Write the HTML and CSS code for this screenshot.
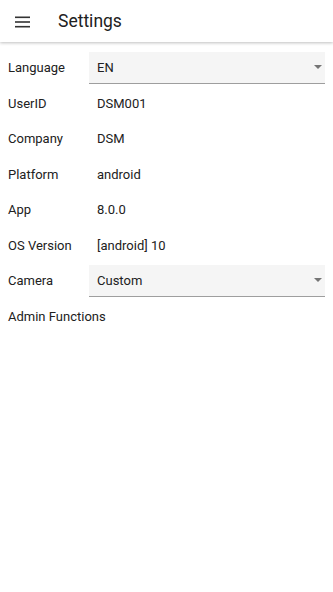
FILE: index.html
```html
<html lang="en-US">

<head>
	<title>Settings</title>
	<meta charset="utf-8">
	<meta name="viewport" content="width=device-width, initial-scale=1.0">
	<link rel="stylesheet" href="styles.css">
</head>

<body>
	<div class="toolbar">
		<div class="menu">
			<svg width="15" height="12" viewBox="0 0 15 12">
				<rect x="0" y="0.5" width="15" height="1.6" fill="#333"></rect>
				<rect x="0" y="5.2" width="15" height="1.6" fill="#333"></rect>
				<rect x="0" y="9.9" width="15" height="1.6" fill="#333"></rect>
			</svg>
		</div>
		<h1>Settings</h1>
	</div>

	<div class="content">
		<div class="row">
			<div class="label">Language</div>
			<div class="select">
				<span>EN</span>
				<div class="arrow"></div>
			</div>
		</div>
		<div class="row">
			<div class="label">UserID</div>
			<div class="value">DSM001</div>
		</div>
		<div class="row">
			<div class="label">Company</div>
			<div class="value">DSM</div>
		</div>
		<div class="row">
			<div class="label">Platform</div>
			<div class="value">android</div>
		</div>
		<div class="row">
			<div class="label">App</div>
			<div class="value">8.0.0</div>
		</div>
		<div class="row">
			<div class="label">OS Version</div>
			<div class="value">[android] 10</div>
		</div>
		<div class="row">
			<div class="label">Camera</div>
			<div class="select">
				<span>Custom</span>
				<div class="arrow"></div>
			</div>
		</div>
		<div class="row">
			<div class="label wide">Admin Functions</div>
		</div>
	</div>
</body>
</html>
```

FILE: styles.css
```css
html, body {
	padding: 0;
	margin: 0;
	background: #fff;
	color: #212121;
	font-family: Roboto, "Noto Sans", sans-serif;
	font-size: 13px;
}

*, *:before, *:after {
	box-sizing: border-box;
}

.toolbar {
	display: flex;
	align-items: center;
	height: 42px;
	background: #fff;
	box-shadow: 0 1px 3px rgba(0, 0, 0, 0.25);
	position: relative;
}

.toolbar .menu {
	display: flex;
	width: 58px;
	padding-left: 15px;
	padding-top: 1px;
}

.toolbar h1 {
	margin: 0;
	font-size: 17.5px;
	font-weight: 400;
	color: #212121;
}

.content {
	padding: 8px 8px 0 8px;
}

.row {
	display: flex;
	align-items: center;
	height: 35.5px;
}

.label {
	width: 81px;
	flex-shrink: 0;
}

.label.wide {
	width: auto;
}

.value {
	padding-left: 8px;
}

.select {
	flex-grow: 1;
	display: flex;
	align-items: center;
	justify-content: space-between;
	height: 32px;
	padding: 0 3px 0 8px;
	background: #f5f5f5;
	border-bottom: 1px solid #9e9e9e;
}

.arrow {
	width: 0;
	height: 0;
	border-left: 4px solid transparent;
	border-right: 4px solid transparent;
	border-top: 4px solid #757575;
}
```
